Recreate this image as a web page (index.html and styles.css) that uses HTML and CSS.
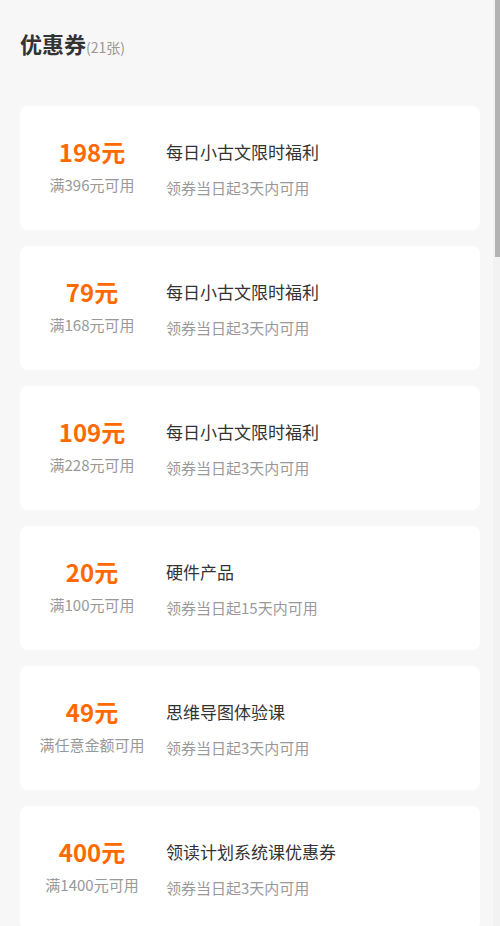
FILE: index.html
```html
<!DOCTYPE html>
<html lang="zh-CN">
<head>
    <meta charset="UTF-8">
    <meta name="viewport" content="width=device-width, initial-scale=1.0">
    <title>优惠券</title>
    <link rel="stylesheet" href="styles.css">
</head>
<body>
    <div class="page">
        <h2 class="page-title">优惠券<span class="count">(21张)</span></h2>
        <div class="coupon-list">
            <div class="coupon">
                <div class="coupon-value">
                    <div class="amount">198元</div>
                    <div class="limit">满396元可用</div>
                </div>
                <div class="coupon-info">
                    <div class="name">每日小古文限时福利</div>
                    <div class="expire">领券当日起3天内可用</div>
                </div>
            </div>
            <div class="coupon">
                <div class="coupon-value">
                    <div class="amount">79元</div>
                    <div class="limit">满168元可用</div>
                </div>
                <div class="coupon-info">
                    <div class="name">每日小古文限时福利</div>
                    <div class="expire">领券当日起3天内可用</div>
                </div>
            </div>
            <div class="coupon">
                <div class="coupon-value">
                    <div class="amount">109元</div>
                    <div class="limit">满228元可用</div>
                </div>
                <div class="coupon-info">
                    <div class="name">每日小古文限时福利</div>
                    <div class="expire">领券当日起3天内可用</div>
                </div>
            </div>
            <div class="coupon">
                <div class="coupon-value">
                    <div class="amount">20元</div>
                    <div class="limit">满100元可用</div>
                </div>
                <div class="coupon-info">
                    <div class="name">硬件产品</div>
                    <div class="expire">领券当日起15天内可用</div>
                </div>
            </div>
            <div class="coupon">
                <div class="coupon-value">
                    <div class="amount">49元</div>
                    <div class="limit">满任意金额可用</div>
                </div>
                <div class="coupon-info">
                    <div class="name">思维导图体验课</div>
                    <div class="expire">领券当日起3天内可用</div>
                </div>
            </div>
            <div class="coupon">
                <div class="coupon-value">
                    <div class="amount">400元</div>
                    <div class="limit">满1400元可用</div>
                </div>
                <div class="coupon-info">
                    <div class="name">领读计划系统课优惠券</div>
                    <div class="expire">领券当日起3天内可用</div>
                </div>
            </div>
        </div>
    </div>
    <div class="scroll-track"><div class="scroll-thumb"></div></div>
</body>
</html>
```

FILE: styles.css
```css
html {
    background: #f7f7f7;
}
body {
    margin: 0;
    font-family: "Noto Sans CJK SC", "Noto Sans", sans-serif;
    color: #333;
    background: #f7f7f7;
}

.page { padding: 28px 20px 40px; }
.page-title {
    margin: 0;
    height: 30px;
    font-size: 22px;
    line-height: 30px;
    font-weight: bold;
    color: #333;
}
.page-title .count {
    font-size: 14px;
    line-height: 1;
    font-weight: normal;
    color: #999;
}
.coupon-list {
    display: flex;
    flex-direction: column;
    gap: 16px;
    margin-top: 48px;
}
.coupon {
    display: flex;
    align-items: center;
    height: 124px;
    background: #fff;
    border-radius: 8px;
}
.coupon-value {
    width: 144px;
    padding-bottom: 4px;
    text-align: center;
}
.amount {
    font-size: 24px;
    line-height: 32px;
    font-weight: bold;
    color: #ff6a00;
}
.limit {
    margin-top: 6px;
    font-size: 15px;
    line-height: 22px;
    color: #999;
}
.coupon-info { padding: 2px 0 0 2px; }
.name {
    font-size: 17px;
    line-height: 24px;
    color: #333;
}
.expire {
    margin-top: 13px;
    font-size: 15px;
    line-height: 22px;
    color: #999;
}

/* page scrollbar, drawn over the right edge */
.scroll-track {
    position: fixed;
    top: 0;
    right: 0;
    width: 7px;
    height: 100%;
    background: #f2f2f2;
}
.scroll-thumb {
    margin-left: 2px;
    width: 5px;
    height: 257px;
    background: #b3b3b3;
}
```
